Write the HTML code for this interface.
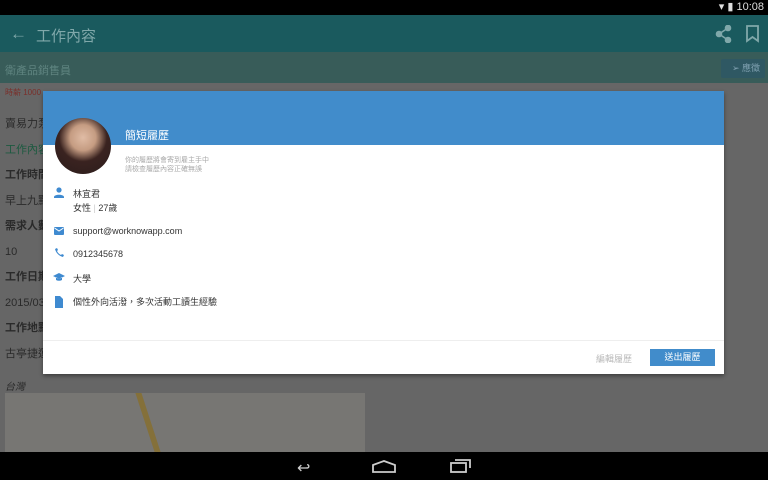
<!DOCTYPE html><html><head><meta charset="utf-8"><style>
*{margin:0;padding:0;box-sizing:border-box}
body{width:768px;height:480px;overflow:hidden;background:#666;font-family:"Liberation Sans","Noto Sans CJK TC",sans-serif;position:relative}
.a{position:absolute}
</style></head><body>
<div class="a" style="left:0;top:0;width:768px;height:15px;background:#000;color:#ddd;font-size:11px;text-align:right;padding-right:4px;line-height:15px">▾ ▮ 10:08</div>
<div class="a" style="left:0;top:15px;width:768px;height:37px;background:#1a5a5e"></div>
<div class="a" style="left:10px;top:24px;color:#80a8aa;font-size:17px">←</div>
<div class="a" style="left:36px;top:25px;color:#80a8aa;font-size:15px">工作內容</div>
<svg class="a" style="left:715px;top:25px" width="18" height="18" stroke="#80a8aa" fill="#80a8aa" stroke-width="1.6"><path d="M13 3L4 9l9 6" fill="none"/><circle cx="13" cy="3" r="2.5"/><circle cx="4" cy="9" r="2.5"/><circle cx="13" cy="15" r="2.5"/></svg>
<svg class="a" style="left:746px;top:25px" width="14" height="18" fill="none" stroke="#80a8aa" stroke-width="1.8"><path d="M1 1h11v15l-5.5-4L1 16z"/></svg>
<div class="a" style="left:0;top:52px;width:768px;height:31px;background:#385c59"></div>
<div class="a" style="left:5px;top:62px;color:#5f8480;font-size:11px">衛產品銷售員</div>
<div class="a" style="left:721px;top:59px;width:44px;height:19px;background:#2f5863;border-radius:2px;color:#7fa0b0;font-size:9px;line-height:19px;text-align:right;padding-right:5px">➢ 應徵</div>
<div class="a" style="left:5px;top:87px;color:#7a2f2a;font-size:8px">時薪 1000</div>
<div class="a" style="left:5px;top:112px;color:#2a2a2a;font-size:11px;line-height:25.5px">賣易力泵<br><span style="color:#1d5a40">工作內容</span><br><b>工作時間</b><br>早上九點<br><b>需求人數</b><br>10<br><b>工作日期</b><br>2015/03<br><b>工作地點</b><br>古亭捷運</div>
<div class="a" style="left:5px;top:378px;color:#2a2a2a;font-size:10px;font-style:italic">台灣</div>
<div class="a" style="left:5px;top:393px;width:360px;height:59px;background:#777673"></div>
<div class="a" style="left:145px;top:393px;width:6px;height:59px;background:#84703a;transform:skewX(18deg)"></div>
<div class="a" style="left:43px;top:91px;width:681px;height:283px;background:#fff;box-shadow:0 2px 4px rgba(0,0,0,.4)"></div>
<div class="a" style="left:43px;top:91px;width:681px;height:54px;background:#418ccb"></div>
<div class="a" style="left:55px;top:118px;width:56px;height:56px;border-radius:50%;background:radial-gradient(circle at 50% 35%,#e0bca5 0,#c59c82 28%,#3a2320 52%,#2a1c1c 100%)"></div>
<div class="a" style="left:125px;top:127px;color:#fff;font-size:11px">簡短履歷</div>
<div class="a" style="left:125px;top:156px;color:#aaa;font-size:7px;line-height:9px">你的履歷將會寄到雇主手中<br>請檢查履歷內容正確無誤</div>
<svg class="a" style="left:53px;top:187px" width="12" height="140" fill="#3f8ad0">
<circle cx="6" cy="3" r="2.6"/><path d="M1 10c0-3 10-3 10 0v1H1z"/>
<rect x="1" y="40" width="10" height="8" rx="1"/><path d="M1.5 41l4.5 3 4.5-3" stroke="#fff" fill="none"/>
<path d="M2 62c1 4 4 7 8 8l1-2-2-1-1 1c-2-1-3-2-4-4l1-1-1-2z"/>
<path d="M0 89l6-3 6 3-6 3z M3 90v3c2 1 4 1 6 0v-3l-3 2z"/>
<path d="M2 109h5l3 3v9H2z"/>
</svg>
<div class="a" style="left:73px;top:187px;color:#333;font-size:9px;line-height:14px">林宜君<br>女性 <span style="color:#ccc">|</span> 27歲</div>
<div class="a" style="left:73px;top:226px;color:#333;font-size:9px">support@worknowapp.com</div>
<div class="a" style="left:73px;top:249px;color:#333;font-size:9px">0912345678</div>
<div class="a" style="left:73px;top:272px;color:#333;font-size:9px">大學</div>
<div class="a" style="left:73px;top:295px;color:#333;font-size:9px">個性外向活潑，多次活動工讀生經驗</div>
<div class="a" style="left:43px;top:340px;width:681px;height:1px;background:#eee"></div>
<div class="a" style="left:596px;top:352px;color:#bbb;font-size:9px">編輯履歷</div>
<div class="a" style="left:650px;top:349px;width:65px;height:17px;background:#418ccb;color:#fff;font-size:9px;text-align:center;line-height:17px">送出履歷</div>
<div class="a" style="left:0;top:452px;width:768px;height:28px;background:#000"></div>
<div class="a" style="left:297px;top:458px;color:#ccc;font-size:16px">↩</div>
<svg class="a" style="left:372px;top:460px" width="24" height="13" fill="none" stroke="#ccc" stroke-width="1.8"><path d="M1 5L12 1l11 4v7H1z"/></svg>
<svg class="a" style="left:450px;top:458px" width="22" height="15" fill="none" stroke="#ccc" stroke-width="1.8"><rect x="1" y="5" width="15" height="9"/><path d="M5 2h15v8"/></svg>
</body></html>
